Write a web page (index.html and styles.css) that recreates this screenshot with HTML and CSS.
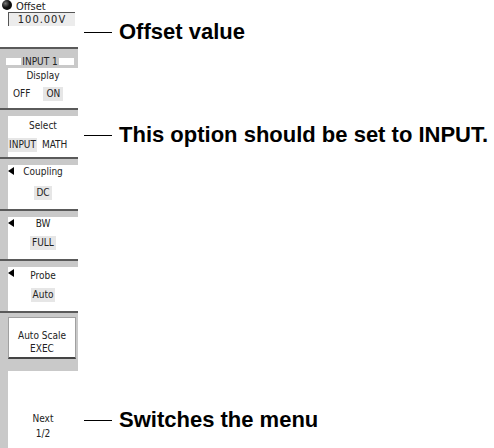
FILE: index.html
```html
<!DOCTYPE html>
<html>
<head>
    <meta charset="UTF-8" name="viewport" content="width=device-width, initial-scale=1.0"/>
    <title>Input menu</title>
    <link rel="stylesheet" href="styles.css">
</head>
<body>
<div class="page">
    <div class="panel">
        <div class="offset">
            <div class="offset-head">
                <span class="knob"></span>
                <span class="offset-label">Offset</span>
            </div>
            <div class="offset-value">100.00V</div>
        </div>
        <div class="sep"></div>
        <div class="title">
            <span class="bar"></span>
            <span class="title-text">INPUT 1</span>
            <span class="bar"></span>
        </div>
        <div class="item display">
            <div class="label">Display</div>
            <div class="opts">
                <span class="opt">OFF</span>
                <span class="opt on">ON</span>
            </div>
        </div>
        <div class="sep"></div>
        <div class="item select">
            <div class="label">Select</div>
            <div class="opts">
                <span class="opt on">INPUT</span>
                <span class="opt">MATH</span>
            </div>
        </div>
        <div class="sep"></div>
        <div class="item coupling">
            <span class="arrow"></span>
            <div class="label">Coupling</div>
            <div class="opts"><span class="opt on">DC</span></div>
        </div>
        <div class="sep"></div>
        <div class="item bw">
            <span class="arrow"></span>
            <div class="label">BW</div>
            <div class="opts"><span class="opt on">FULL</span></div>
        </div>
        <div class="sep"></div>
        <div class="item probe">
            <span class="arrow"></span>
            <div class="label">Probe</div>
            <div class="opts"><span class="opt on">Auto</span></div>
        </div>
        <div class="sep short"></div>
        <div class="button-area">
            <div class="button">Auto Scale<br>EXEC</div>
        </div>
        <div class="item next">Next<br>1/2</div>
    </div>

    <div class="note note-offset">Offset value</div>
    <div class="note note-select">This option should be set to INPUT.</div>
    <div class="note note-next">Switches the menu</div>
</div>
</body>
</html>
```

FILE: styles.css
```css
body {
    margin: 0;
    background: #fff;
    font-family: "Liberation Sans", Arial, sans-serif;
}
.page {
    position: relative;
    width: 494px;
    height: 448px;
    overflow: hidden;
}
.panel {
    width: 78px;
    height: 448px;
    background: #c9c9c9;
    display: flex;
    flex-direction: column;
    overflow: hidden;
    font-family: "DejaVu Sans Condensed", "Liberation Sans", sans-serif;
    font-size: 10px;
    color: #222;
}

/* offset block */
.offset {
    height: 47px;
    flex-shrink: 0;
    background: #fff;
}
.offset-head {
    height: 12px;
    display: flex;
    align-items: flex-start;
}
.knob {
    width: 10px;
    height: 10px;
    margin-left: 2px;
    border-radius: 50%;
    background: radial-gradient(circle at 35% 35%, #777 0, #111 45%, #000 100%);
}
.offset-label {
    margin-left: 4px;
    font-size: 11px;
    line-height: 12px;
    padding-top: 1px;
    height: 11px;
}
.offset-value {
    margin-left: 8px;
    width: 66px;
    height: 13px;
    line-height: 14px;
    border-top: 1px solid #555;
    border-left: 1px solid #555;
    background: #ececec;
    text-align: center;
    font-size: 11px;
    letter-spacing: 1px;
}

.sep {
    height: 8px;
    flex-shrink: 0;
    border-top: 2px solid #5a5a5a;
    box-sizing: border-box;
}
.sep.short {
    height: 6px;
}

/* channel title */
.title {
    height: 13px;
    flex-shrink: 0;
    display: flex;
    align-items: center;
    padding: 0 4px 0 6px;
}
.bar {
    flex: 1;
    height: 7px;
    background: #fff;
}
.title-text {
    padding: 0 1px;
    line-height: 13px;
}

/* soft keys */
.item {
    position: relative;
    margin-left: 8px;
    height: 42px;
    flex-shrink: 0;
    background: #fff;
    display: flex;
    flex-direction: column;
    align-items: center;
    padding-top: 0;
    box-sizing: border-box;
}
.display {
    height: 40px;
    padding-top: 1px;
}
.select {
    height: 41px;
    padding-top: 3px;
}
.coupling {
    height: 44px;
}
.probe {
    height: 44px;
    padding-top: 2px;
}
.label {
    line-height: 14px;
}
.opts {
    display: flex;
    margin-top: 5px;
}
.coupling .opts {
    margin-top: 7px;
}
.display .opts {
    align-self: flex-start;
    padding-left: 3px;
    gap: 11px;
    margin-top: 4px;
}
.select .opts {
    align-self: flex-start;
    gap: 4px;
    margin-top: 5px;
}
.opt {
    line-height: 14px;
    padding: 0 2px;
}
.display .opt.on {
    padding: 0 3px;
}
.select .opt {
    padding: 0 1px;
}
.opt.on {
    background: #e6e6e6;
}
.arrow {
    position: absolute;
    left: 0;
    top: 2px;
    width: 0;
    height: 0;
    border-top: 4px solid transparent;
    border-bottom: 4px solid transparent;
    border-right: 6px solid #000;
}

.button-area {
    height: 46px;
    flex-shrink: 0;
    padding: 0 2px 0 8px;
    box-sizing: border-box;
}
.button {
    height: 42px;
    box-sizing: border-box;
    background: #fff;
    border: 1px solid #a0a0a0;
    border-bottom: 2px solid #444;
    text-align: center;
    line-height: 13px;
    padding-top: 11px;
}
.next {
    height: 78px;
    margin-top: 8px;
    display: block;
    text-align: center;
    line-height: 15px;
    padding-top: 40px;
}

/* callouts */
.note {
    position: absolute;
    left: 84px;
    display: flex;
    align-items: center;
    gap: 7px;
    font-weight: bold;
    font-size: 22px;
    line-height: 24px;
    color: #000;
}
.note::before {
    content: "";
    width: 28px;
    height: 1px;
    background: #000;
}
.note-offset {
    top: 20px;
}
.note-select {
    top: 123px;
}
.note-next {
    top: 408px;
}
```
